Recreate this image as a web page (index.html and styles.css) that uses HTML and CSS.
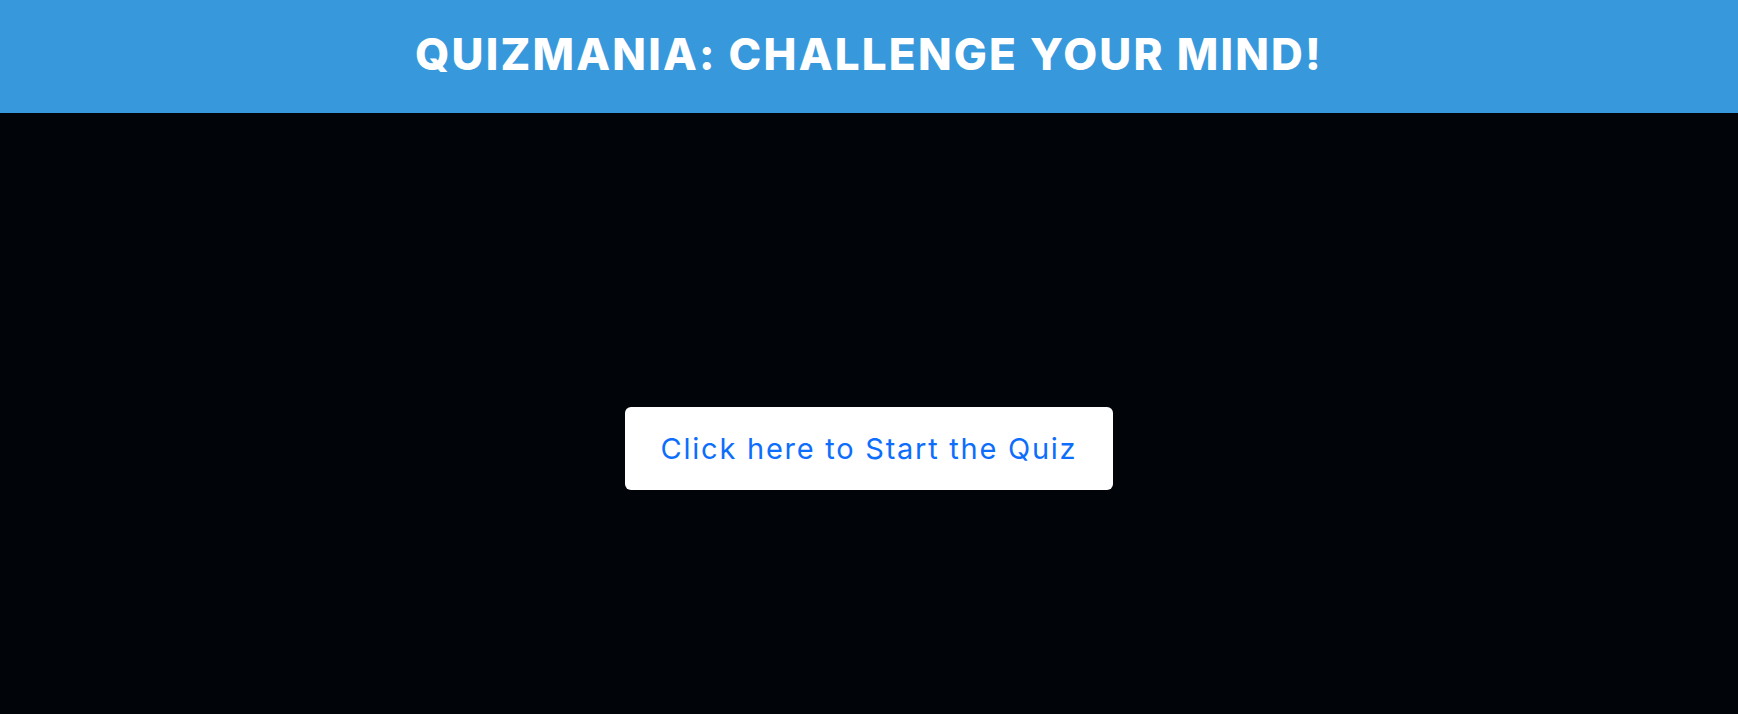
FILE: index.html
```html
<!DOCTYPE html>
<html lang="en">
<head>
<meta charset="utf-8">
<title>Quizmania</title>
<link rel="stylesheet" href="styles.css">
</head>
<body>
<header class="topbar">
  <h1 class="title">QUIZMANIA: CHALLENGE YOUR MIND!</h1>
</header>
<main class="stage">
  <button class="start-btn" type="button">Click here to Start the Quiz</button>
</main>
</body>
</html>
```
FILE: styles.css
```css
html, body {
  margin: 0;
  padding: 0;
  height: 100%;
}
body {
  background: #01050a;
  font-family: "Inter", "Open Sans", sans-serif;
}
.topbar {
  height: 113px;
  box-sizing: border-box;
  padding-bottom: 6px;
  background: #3799dc;
  display: flex;
  align-items: center;
  justify-content: center;
}
.title {
  margin: 0;
  color: #ffffff;
  font-family: "Inter", sans-serif;
  font-weight: 800;
  font-size: 44px;
  letter-spacing: 2.2px;
  line-height: 1;
}
.stage {
  display: flex;
  flex-direction: column;
  align-items: center;
  padding-top: 294px;
}
.start-btn {
  width: 488px;
  height: 83px;
  padding: 0;
  background: #ffffff;
  border: none;
  border-radius: 6px;
  color: #0d6efd;
  font-family: "Inter", sans-serif;
  font-size: 29px;
  font-weight: 400;
  letter-spacing: 1.75px;
  cursor: pointer;
}
```
